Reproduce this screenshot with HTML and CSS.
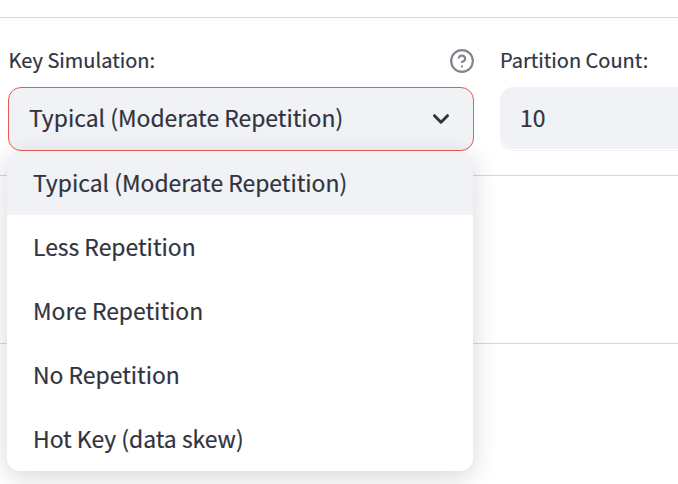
FILE: index.html
```html
<!DOCTYPE html>
<html lang="en">
<head>
<meta charset="utf-8">
<title>Simulation settings</title>
<link rel="stylesheet" href="styles.css">
</head>
<body>
<main class="page">
  <section class="settings">
    <div class="field">
      <div class="label-row">
        <span class="label">Key Simulation:</span>
        <svg class="help" viewBox="0 0 24 24" fill="none" stroke="currentColor" stroke-width="2" stroke-linecap="round" stroke-linejoin="round" aria-hidden="true">
          <circle cx="12" cy="12" r="10"/>
          <path d="M9.09 9a3 3 0 0 1 5.83 1c0 2-3 3-3 3"/>
          <path d="M12 17h.01"/>
        </svg>
      </div>
      <div class="select">
        <span class="value">Typical (Moderate Repetition)</span>
        <svg class="chevron" viewBox="0 0 18 12" fill="none" stroke="currentColor" stroke-width="3" stroke-linecap="round" stroke-linejoin="round" aria-hidden="true">
          <path d="M2.5 2.7 9 9.2l6.5-6.5"/>
        </svg>
      </div>
      <ul class="menu">
        <li class="option selected">Typical (Moderate Repetition)</li>
        <li class="option">Less Repetition</li>
        <li class="option">More Repetition</li>
        <li class="option">No Repetition</li>
        <li class="option">Hot Key (data skew)</li>
      </ul>
    </div>
    <div class="field count">
      <div class="label-row"><span class="label">Partition Count:</span></div>
      <div class="number"><span class="value">10</span></div>
    </div>
  </section>
  <section class="panel"></section>
</main>
</body>
</html>
```

FILE: styles.css
```css
* { box-sizing: border-box; }
html { overflow: hidden; }
body {
  margin: 0;
  height: 484px;
  overflow: hidden;
  background: #fff;
  color: #31333f;
  font-family: "Noto Sans CJK SC", "Noto Sans", sans-serif;
  font-size: 22.9px;
  -webkit-text-stroke: 0.2px #31333f;
}
.page { padding-top: 17px; }
.settings {
  display: flex;
  gap: 26px;
  height: 159px;
  padding: 26px 0 0 8px;
  border-top: 1px solid #d5d6d8;
  border-bottom: 1px solid #d5d6d8;
}
.panel { height: 168px; border-bottom: 1px solid #d5d6d8; }
.field { position: relative; flex: 0 0 466px; }
.count { flex: 1 1 0; min-width: 0; }
.label-row {
  display: flex;
  align-items: center;
  justify-content: space-between;
  height: 34px;
  margin-bottom: 9px;
}
.label { font-size: 20px; line-height: 34px; padding: 0 0 3px 0.6px; white-space: nowrap; }
.count .label { padding-left: 0; }
.help { width: 26px; height: 26px; margin-right: -0.8px; color: #83848b; }
.select, .number {
  display: flex;
  align-items: center;
  justify-content: space-between;
  height: 64px;
  border-radius: 13px;
  background: #f0f2f6;
  border: 1px solid #f0f2f6;
  padding: 0 23px 0 20px;
}
.number {
  padding: 0 0 0 19px;
  border-right: 0;
  border-radius: 13px 0 0 13px;
  box-shadow: inset 0 -1px 0 #fff;
}
.select { border-color: #e8594f; }
.value { line-height: 60px; padding-bottom: 5px; white-space: nowrap; }
.chevron { width: 18px; height: 12px; }
.menu {
  position: absolute;
  top: 107px;
  left: -1px;
  width: 466px;
  margin: 0;
  padding: 0;
  list-style: none;
  background: #fff;
  border-radius: 13px;
  overflow: hidden;
  box-shadow: 0 6px 26px rgba(0, 0, 0, 0.16);
}
.option { height: 64px; line-height: 62px; padding-left: 26px; white-space: nowrap; }
.selected { background: #f0f2f6; }
```
